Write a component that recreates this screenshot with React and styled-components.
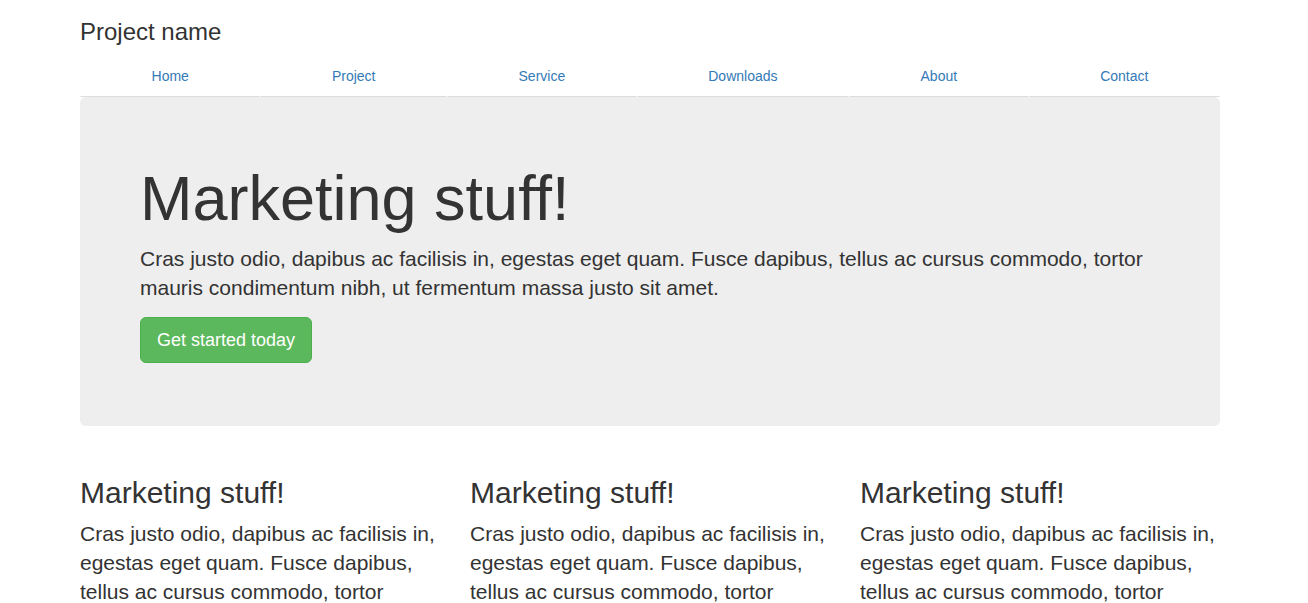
import React from 'react'
import styled, { createGlobalStyle } from 'styled-components'

const GlobalStyle = createGlobalStyle`
  * { box-sizing: border-box; }
  body {
    margin: 0;
    font-family: "Liberation Sans", Arial, sans-serif;
    font-size: 14px;
    line-height: 1.42857143;
    color: #333;
    background: #fff;
  }
`;

const Container = styled.div`
  width: 1170px;
  margin: 0 69px 0 65px;
  padding: 0 15px;
`;

const Masthead = styled.div``;

const Brand = styled.h3`
  margin: 19px 0 10px;
  font-size: 24px;
  font-weight: 500;
  line-height: 1.1;
  color: #333;
`;

const Nav = styled.ul`
  display: table;
  width: 100%;
  margin: 0;
  padding: 0;
  list-style: none;
`;

const NavItem = styled.li`
  display: table-cell;
  width: 1%;
  text-align: center;
`;

const NavLink = styled.a`
  display: block;
  padding: 10px 15px;
  color: #337ab7;
  text-decoration: none;
  border: 1px solid transparent;
  border-bottom-color: #ddd;
  border-radius: 4px 4px 0 0;
  cursor: pointer;
  &:hover {
    background-color: #eee;
  }
`;

const Jumbotron = styled.div`
  padding: 48px 60px;
  margin-bottom: 30px;
  background-color: #eee;
  border-radius: 6px;
`;

const Title = styled.h1`
  margin: 19px 0 10px;
  font-size: 63px;
  font-weight: 500;
  line-height: 1.1;
`;

const Lead = styled.p`
  margin: 0 0 15px;
  font-size: 21px;
  font-weight: 200;
  line-height: 29px;
`;

const Button = styled.a`
  display: inline-block;
  padding: 10px 16px;
  font-size: 18px;
  line-height: 1.3333333;
  color: #fff;
  background-color: #5cb85c;
  border: 1px solid #4cae4c;
  border-radius: 6px;
  text-decoration: none;
  vertical-align: middle;
  cursor: pointer;
`;

const Row = styled.div`
  display: grid;
  grid-template-columns: repeat(3, 1fr);
  margin: 0 -15px;
`;

const Col = styled.div`
  padding: 0 15px;
`;

const ColTitle = styled.h2`
  margin: 20px 0 10px;
  font-size: 30px;
  font-weight: 500;
  line-height: 1.1;
`;

const ColText = styled.p`
  margin: 0 0 10px;
  font-size: 21px;
  line-height: 29px;
`;

const links = ['Home', 'Project', 'Service', 'Downloads', 'About', 'Contact'];
const body = 'Cras justo odio, dapibus ac facilisis in, egestas eget quam. Fusce dapibus, tellus ac cursus commodo, tortor mauris condimentum nibh, ut fermentum massa justo sit amet risus.';

const App = () => {
  return (
    <>
      <GlobalStyle />
      <Container>
        <Masthead>
          <Brand>Project name</Brand>
          <Nav>
            {links.map((l) => (
              <NavItem key={l}>
                <NavLink>{l}</NavLink>
              </NavItem>
            ))}
          </Nav>
        </Masthead>

        <Jumbotron>
          <Title>Marketing stuff!</Title>
          <Lead>
            Cras justo odio, dapibus ac facilisis in, egestas eget quam. Fusce dapibus, tellus ac cursus commodo, tortor mauris condimentum nibh, ut fermentum massa justo sit amet.
          </Lead>
          <Lead>
            <Button>Get started today</Button>
          </Lead>
        </Jumbotron>

        <Row>
          {[0, 1, 2].map((i) => (
            <Col key={i}>
              <ColTitle>Marketing stuff!</ColTitle>
              <ColText>{body}</ColText>
            </Col>
          ))}
        </Row>
      </Container>
    </>
  )
}

export default App
